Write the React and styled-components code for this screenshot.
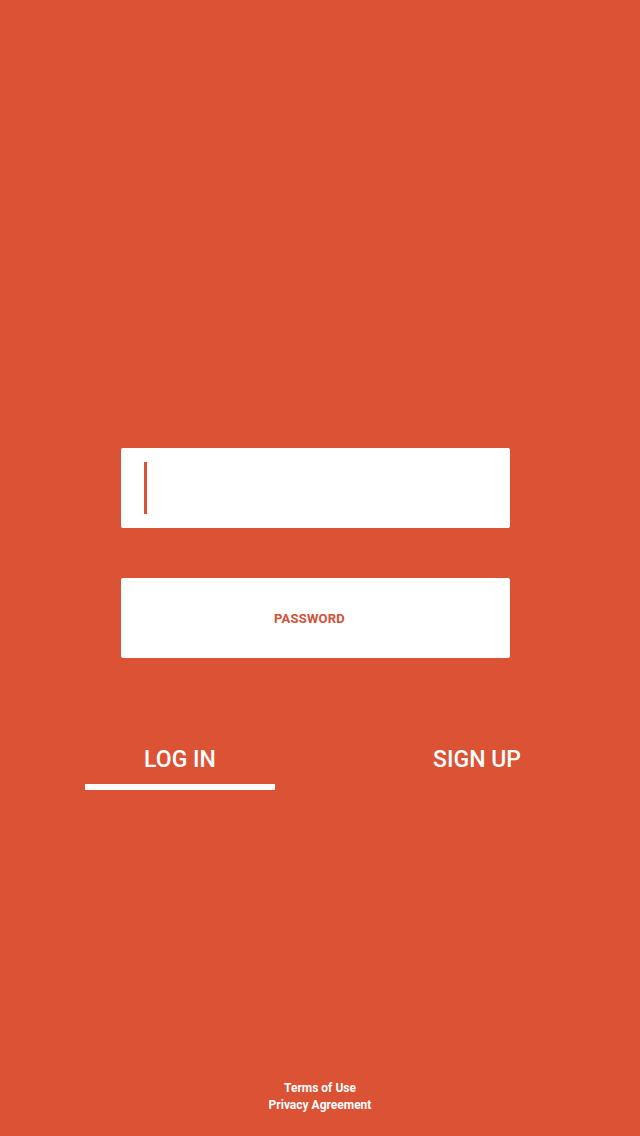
import React from 'react';
import styled, { createGlobalStyle } from 'styled-components';

const GlobalStyle = createGlobalStyle`
  html, body {
    margin: 0;
    padding: 0;
    background: #db5234;
  }
  body {
    font-family: Roboto, "Liberation Sans", sans-serif;
  }
`;

const Screen = styled.div`
  width: 640px;
  height: 1136px;
  background: #db5234;
  display: flex;
  flex-direction: column;
  box-sizing: border-box;
  padding-top: 448px;
`;

const Form = styled.div`
  display: flex;
  flex-direction: column;
  gap: 50px;
  padding-left: 121px;
`;

const Field = styled.div`
  width: 389px;
  height: 80px;
  background: #fff;
  border-radius: 2px;
  box-sizing: border-box;
  display: flex;
  align-items: center;
  justify-content: ${p => (p.$center ? 'center' : 'flex-start')};
  padding-left: ${p => (p.$center ? '0' : '23px')};
`;

const Caret = styled.span`
  display: block;
  width: 3px;
  height: 52px;
  background: #db5234;
`;

const Placeholder = styled.span`
  color: #d1513a;
  font-size: 13px;
  font-weight: 700;
  letter-spacing: 0.2px;
  margin-left: -12px;
`;

const Tabs = styled.div`
  display: flex;
  gap: 107px;
  padding-left: 85px;
  margin-top: 83px;
`;

const Tab = styled.div`
  width: 190px;
  display: flex;
  flex-direction: column;
  align-items: center;
  gap: 6px;
  color: #fff;
  font-size: 23px;
  font-weight: 500;
  line-height: 37px;
`;

const Underline = styled.div`
  width: 100%;
  height: 6px;
  background: ${p => (p.$active ? '#fff' : 'transparent')};
`;

const Footer = styled.div`
  margin-top: auto;
  margin-bottom: 22px;
  display: flex;
  flex-direction: column;
  align-items: center;
  color: #fff;
  font-size: 12px;
  font-weight: 700;
  line-height: 17px;
`;

export default function App() {
  return (
    <Screen>
      <GlobalStyle />
      <Form>
        <Field>
          <Caret />
        </Field>
        <Field $center>
          <Placeholder>PASSWORD</Placeholder>
        </Field>
      </Form>
      <Tabs>
        <Tab>
          LOG IN
          <Underline $active />
        </Tab>
        <Tab>
          SIGN UP
          <Underline />
        </Tab>
      </Tabs>
      <Footer>
        <span>Terms of Use</span>
        <span>Privacy Agreement</span>
      </Footer>
    </Screen>
  );
}
